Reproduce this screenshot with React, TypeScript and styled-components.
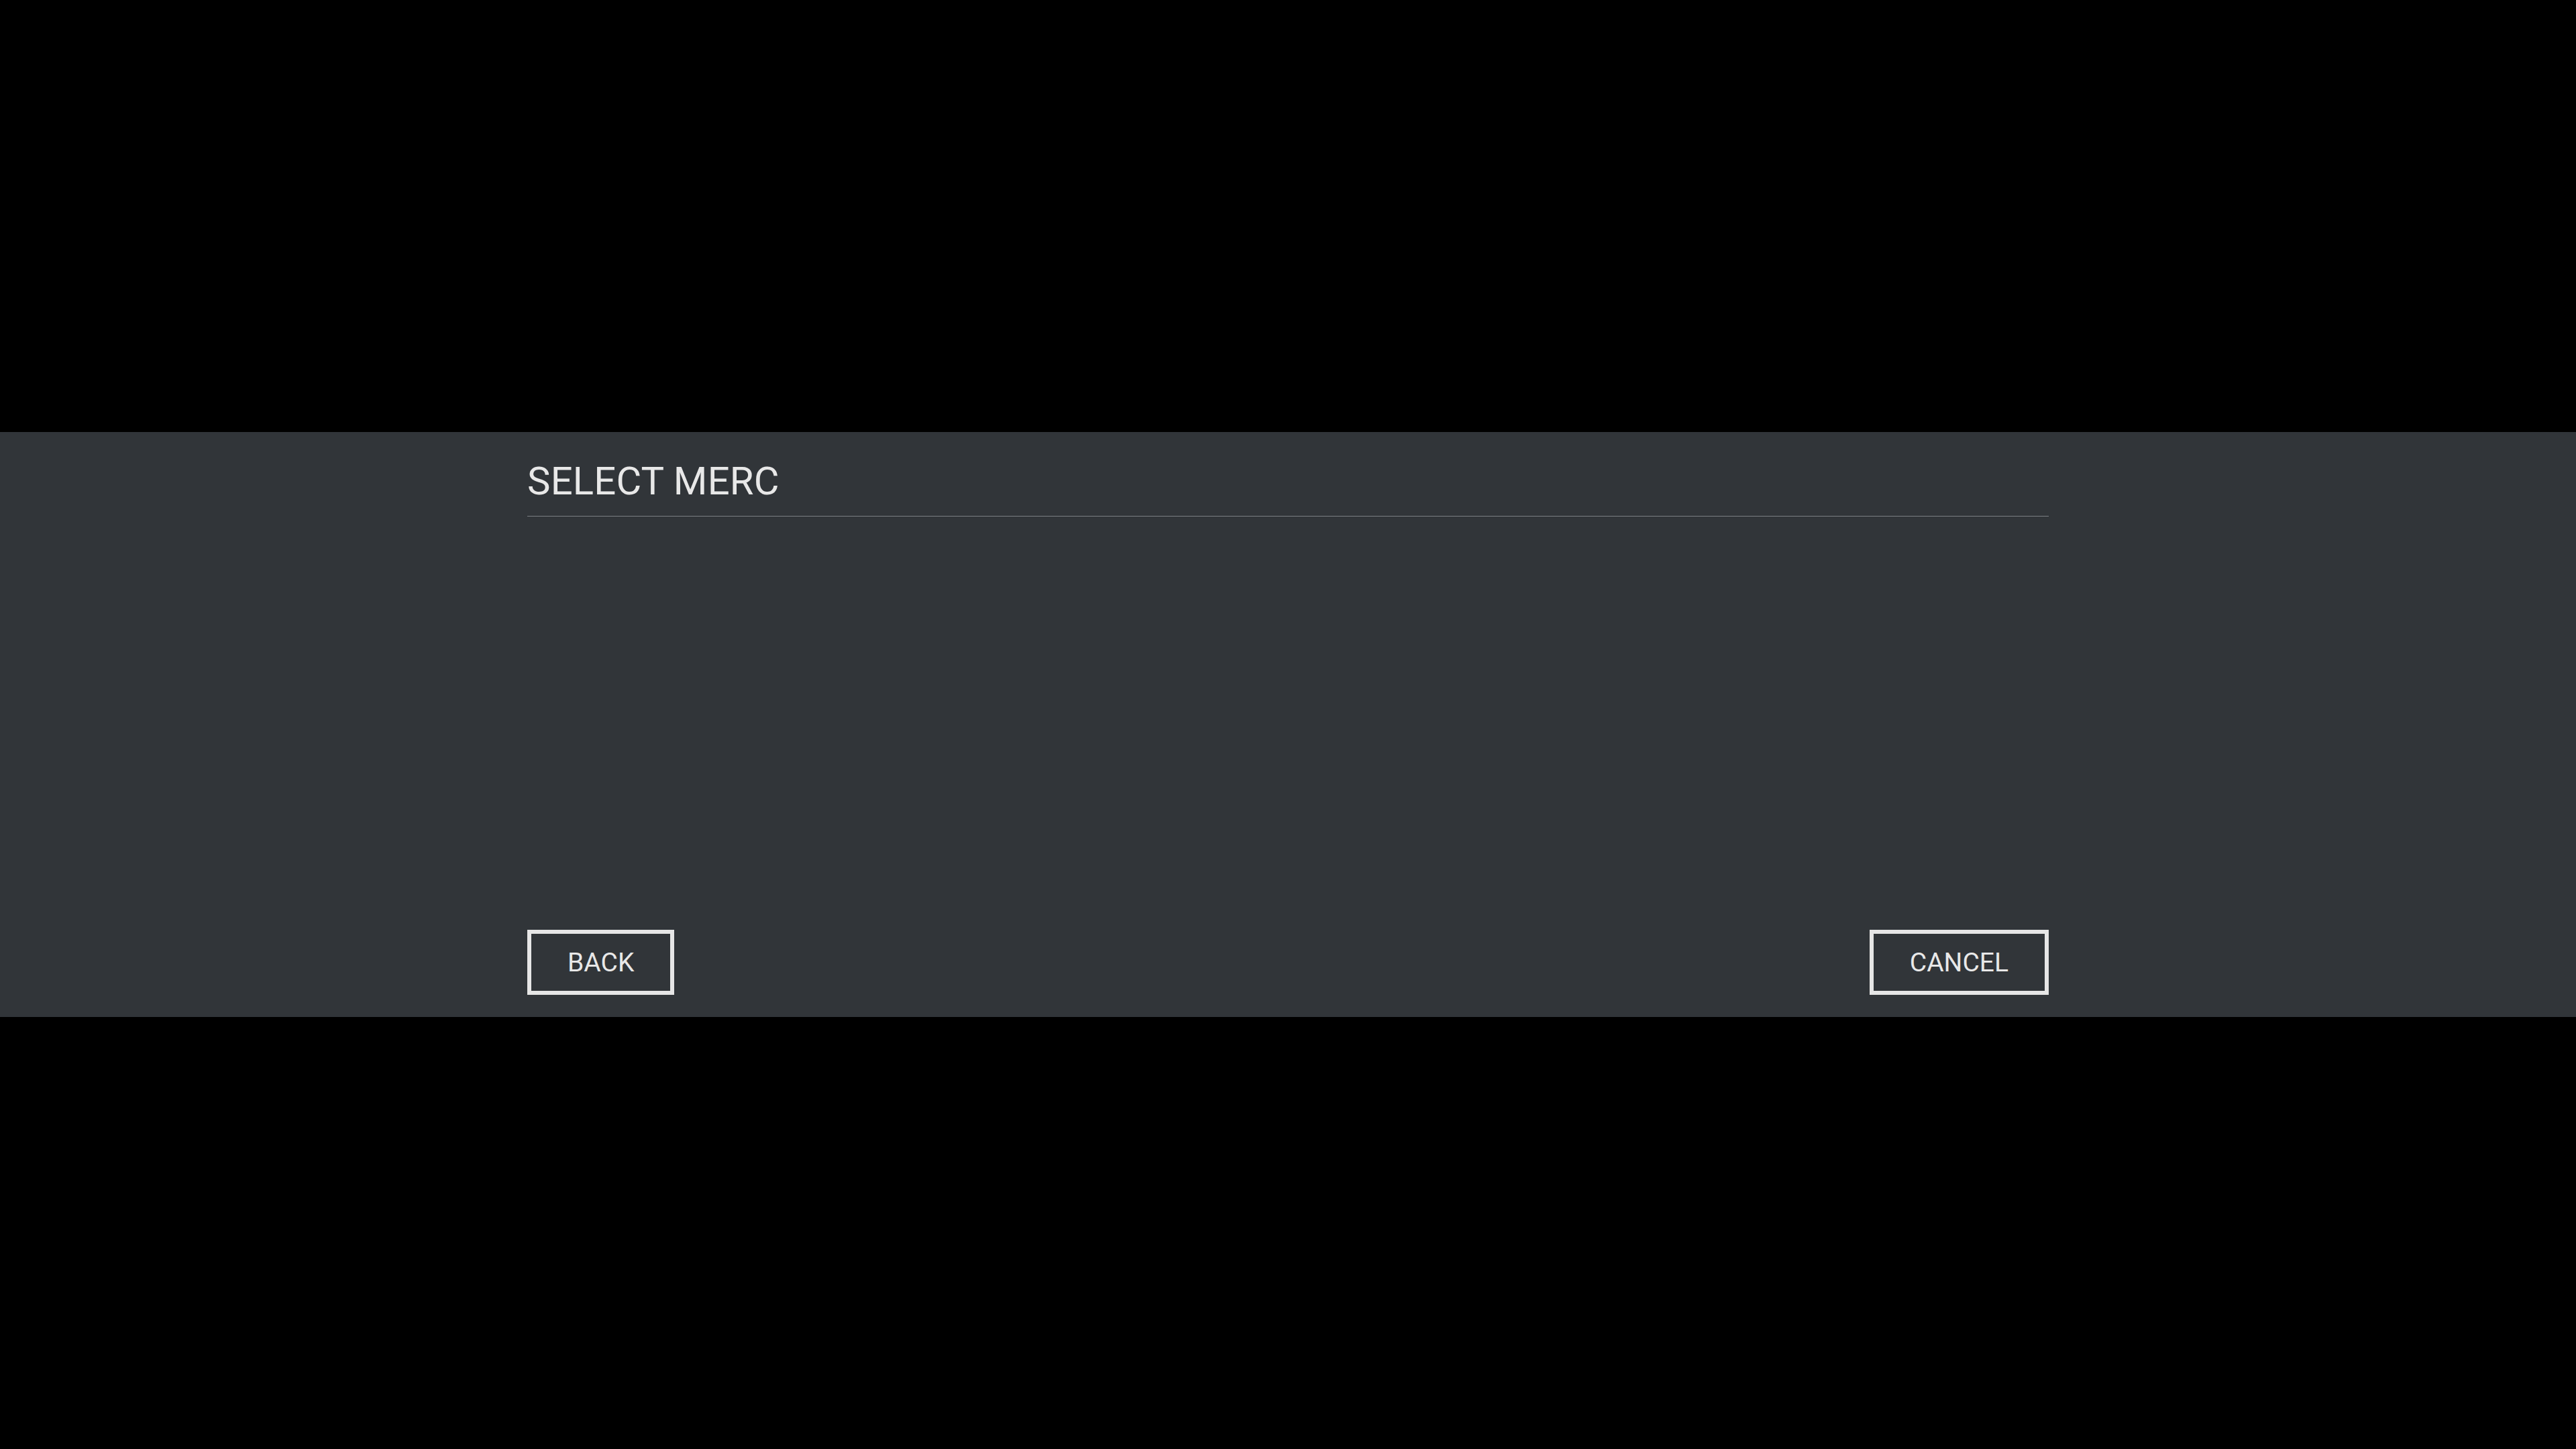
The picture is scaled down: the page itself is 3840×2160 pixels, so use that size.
import React from "react";
import styled, { createGlobalStyle } from "styled-components";

const Global = createGlobalStyle`
  html, body {
    margin: 0;
    padding: 0;
    background: #000;
  }
  body {
    width: 3840px;
    height: 2160px;
    overflow: hidden;
    font-family: Roboto, "Liberation Sans", sans-serif;
  }
`;

const Screen = styled.div`
  width: 3840px;
  height: 2160px;
  background: #000;
  display: flex;
  flex-direction: column;
  padding-top: 644px;
  box-sizing: border-box;
`;

const Band = styled.section`
  height: 872px;
  background: #313539;
  display: flex;
  justify-content: center;
`;

const Dialog = styled.div`
  width: 2268px;
  display: flex;
  flex-direction: column;
  padding: 43px 0 33px;
  box-sizing: border-box;
`;

const Header = styled.header`
  border-bottom: 1px solid #7b7f83;
  padding-bottom: 23px;
`;

const Title = styled.h1`
  margin: 0;
  font-family: Roboto, "Liberation Sans", sans-serif;
  font-weight: 400;
  font-size: 58px;
  line-height: 1;
  letter-spacing: 0.2px;
  color: #e8e8e8;
  padding-top: 1px;
`;

const Body = styled.div`
  flex: 1;
`;

const Footer = styled.footer`
  display: flex;
  justify-content: space-between;
  align-items: flex-end;
`;

const Button = styled.button`
  background: transparent;
  border: 6px solid #e6e6e6;
  color: #e8e8e8;
  font-family: Roboto, "Liberation Sans", sans-serif;
  font-weight: 400;
  font-size: 39px;
  line-height: 1;
  letter-spacing: 0;
  padding: 24px 54px 22px;
  margin: 0;
  cursor: pointer;
  box-sizing: border-box;
  height: 97px;
`;

export default function App() {
  return (
    <>
      <Global />
      <Screen>
        <Band>
          <Dialog>
            <Header>
              <Title>SELECT MERC</Title>
            </Header>
            <Body />
            <Footer>
              <Button>BACK</Button>
              <Button>CANCEL</Button>
            </Footer>
          </Dialog>
        </Band>
      </Screen>
    </>
  );
}
